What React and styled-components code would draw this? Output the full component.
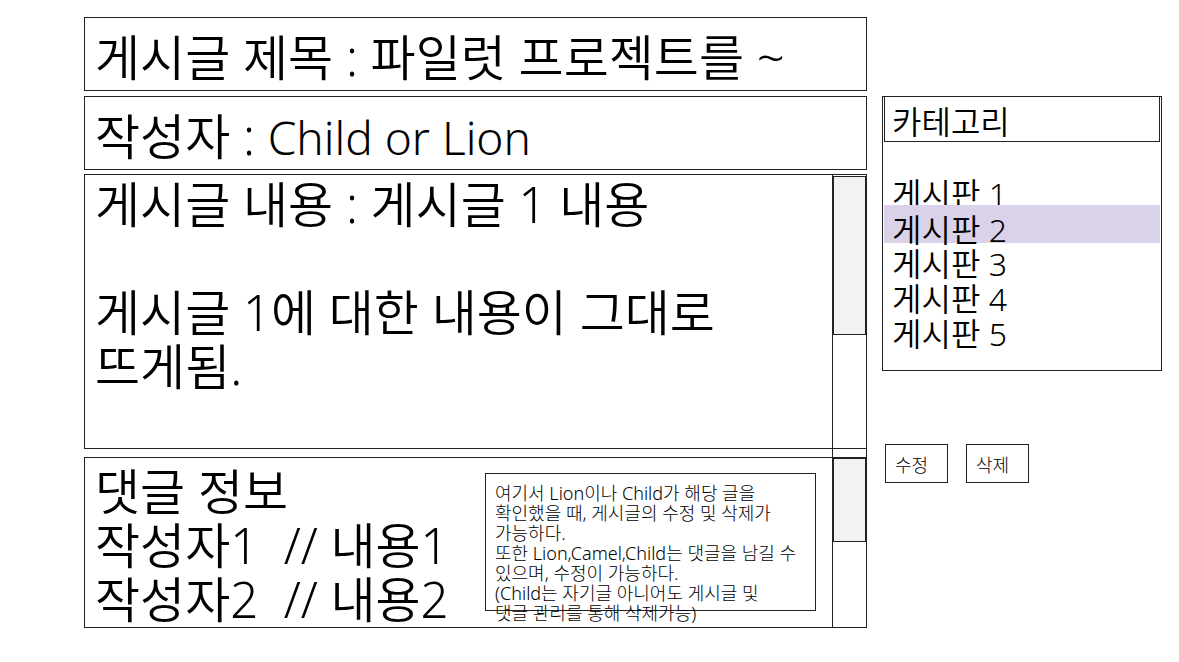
import React from "react";
import styled, { createGlobalStyle } from "styled-components";

const line = "1px solid #222";

const GlobalStyle = createGlobalStyle`
  * { box-sizing: border-box; }
  body {
    margin: 0;
    background: #fff;
    color: #000;
    font-family: "Noto Sans", "Noto Sans CJK KR", sans-serif;
    font-weight: 350;
  }
  h1, h2, p, ul { margin: 0; padding: 0; font-weight: inherit; }
  ul { list-style: none; }
`;

const Page = styled.div`
  display: grid;
  grid-template-columns: minmax(0, 1fr) 280px;
  column-gap: 15px;
  align-items: start;
  padding: 17px 17px 32px 84px;
`;

const Post = styled.main`
  display: flex;
  flex-direction: column;
`;

const Field = styled.div`
  border: ${line};
  padding: 12px 10px 6px;
  margin-bottom: ${(p) => p.$gap}px;
  font-size: 49px;
  line-height: 54px;
  white-space: nowrap;
`;

const FieldTitle = styled.h1`
  font-size: 49px;
  line-height: 54px;
`;

const Latin = styled.span`
  font-size: 46px;
  line-height: 1;
`;

const Panel = styled.section`
  display: flex;
  height: ${(p) => p.$height}px;
  border: ${line};
`;

const PanelText = styled.div`
  flex: 1;
  min-width: 0;
  padding: ${(p) => p.$top}px 10px 0;
  font-size: 49px;
  line-height: 54px;
  white-space: pre;
`;

const PanelLine = styled.p`
  min-height: 54px;
`;

const Track = styled.div`
  width: 34px;
  border-left: ${line};
`;

const Thumb = styled.div`
  height: ${(p) => p.$height}px;
  margin-top: ${(p) => p.$top}px;
  border: ${line};
  background: #f2f2f2;
`;

const TrackJoin = styled.div`
  align-self: flex-end;
  width: 35px;
  height: 8px;
  border: ${line};
  border-width: 0 1px;
`;

const Note = styled.aside`
  width: 331px;
  height: 138px;
  margin: 15px 16px 0 0;
  padding: 9px;
  border: ${line};
  font-size: 18px;
  font-weight: 300;
  line-height: 20px;
  white-space: nowrap;
`;

const Sidebar = styled.div`
  padding-top: 79px;
`;

const Category = styled.nav`
  height: 275px;
  border: ${line};
  font-size: 32px;
`;

const CategoryTitle = styled.h2`
  height: 45px;
  margin: 0 1px 34px;
  padding: 0 7px;
  border: ${line};
  border-top: 0;
  font-size: 32px;
  line-height: 50px;
`;

const Board = styled.a`
  display: block;
  position: relative;
  height: ${(p) => (p.$active ? 38 : 35)}px;
  margin: ${(p) => (p.$active ? "-6px 1px 3px" : "0 1px")};
  padding: 0 8px;
  background: ${(p) => (p.$active ? "#d9d2e9" : "transparent")};
  color: inherit;
  line-height: ${(p) => (p.$active ? 50 : 35)}px;
  text-decoration: none;
`;

const Actions = styled.div`
  display: flex;
  gap: 18px;
  padding: 73px 0 0 3px;
`;

const Button = styled.button`
  width: 63px;
  height: 39px;
  padding: 0 9px;
  border: ${line};
  background: #fff;
  color: inherit;
  font: inherit;
  font-size: 18px;
  font-weight: 300;
  text-align: left;
`;

const boards = ["게시판 1", "게시판 2", "게시판 3", "게시판 4", "게시판 5"];

const content = [
  "게시글 내용 : 게시글 1 내용",
  "",
  "게시글 1에 대한 내용이 그대로",
  "뜨게됨.",
];

const comments = ["댓글 정보", "작성자1  // 내용1", "작성자2  // 내용2"];

const notes = [
  "여기서 Lion이나 Child가 해당 글을",
  "확인했을 때, 게시글의 수정 및 삭제가",
  "가능하다.",
  "또한 Lion,Camel,Child는 댓글을 남길 수",
  "있으며, 수정이 가능하다.",
  "(Child는 자기글 아니어도 게시글 및",
  "댓글 관리를 통해 삭제가능)",
];

export default function App() {
  return (
    <>
      <GlobalStyle />
      <Page>
        <Post>
          <Field $gap={5}>
            <FieldTitle>게시글 제목 : 파일럿 프로젝트를 ~</FieldTitle>
          </Field>
          <Field $gap={4}>
            작성자 : <Latin>Child or Lion</Latin>
          </Field>
          <Panel $height={275}>
            <PanelText $top={2}>
              {content.map((text, i) => (
                <PanelLine key={i}>{text}</PanelLine>
              ))}
            </PanelText>
            <Track>
              <Thumb $top={1} $height={159} />
            </Track>
          </Panel>
          <TrackJoin />
          <Panel $height={171}>
            <PanelText $top={6}>
              {comments.map((text) => (
                <PanelLine key={text}>{text}</PanelLine>
              ))}
            </PanelText>
            <Note>
              {notes.map((text) => (
                <p key={text}>{text}</p>
              ))}
            </Note>
            <Track>
              <Thumb $top={0} $height={84} />
            </Track>
          </Panel>
        </Post>
        <Sidebar>
          <Category>
            <CategoryTitle>카테고리</CategoryTitle>
            <ul>
              {boards.map((name, i) => (
                <li key={name}>
                  <Board href="#" $active={i === 1}>
                    {name}
                  </Board>
                </li>
              ))}
            </ul>
          </Category>
          <Actions>
            <Button type="button">수정</Button>
            <Button type="button">삭제</Button>
          </Actions>
        </Sidebar>
      </Page>
    </>
  );
}
